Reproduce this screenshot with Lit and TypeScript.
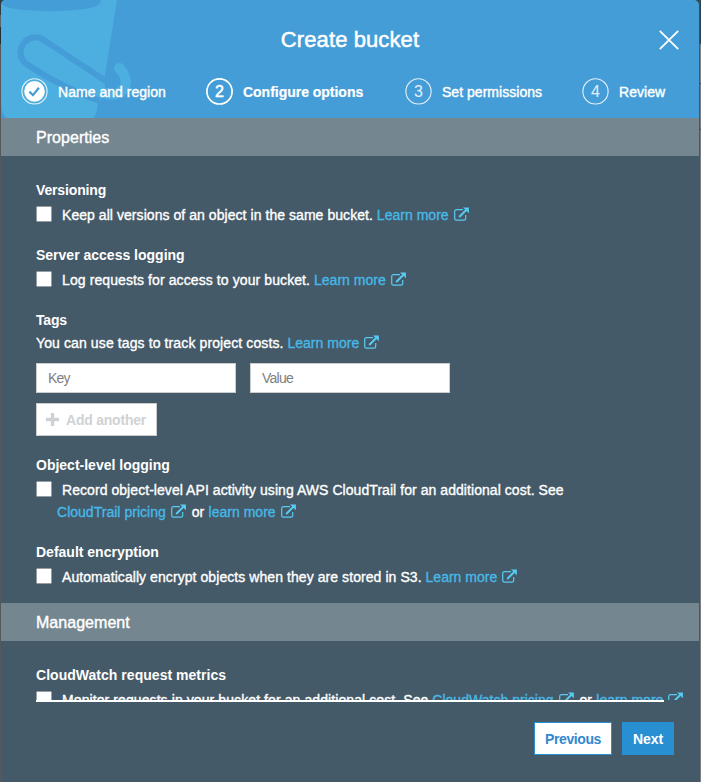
import { LitElement, html, svg, css, type TemplateResult } from "lit";
import { customElement, property } from "lit/decorators.js";
import { classMap } from "lit/directives/class-map.js";

const externalIcon = svg`
  <path d="M9 2.600H2.400a1.700 1.700 0 0 0-1.700 1.700v7.200a1.700 1.700 0 0 0 1.700 1.700h7.600a1.700 1.700 0 0 0 1.700-1.700V8"
    fill="none" stroke="currentColor" stroke-width="1.200"/>
  <path d="M5.200 10L12.200 3" fill="none" stroke="currentColor" stroke-width="2"/>
  <path d="M9 .4h5.900v5.900z" fill="currentColor"/>`;

/** Link followed by the "opens elsewhere" icon. */
@customElement("ext-link")
class ExtLink extends LitElement {
  static styles = css`
    :host { display: inline; color: #45bae9; }
    a { color: inherit; text-decoration: none; letter-spacing: 0.02px; -webkit-text-stroke: 0.3px #45bae9; }
    svg { width: 15px; height: 14px; margin-left: 5px; vertical-align: -1px; color: #58cbf3; }
  `;
  render() {
    return html`<a><slot></slot></a><svg viewBox="0 0 15 14">${externalIcon}</svg>`;
  }
}

/** Numbered entry of the wizard header. */
@customElement("wizard-step")
class WizardStep extends LitElement {
  @property({ type: Number }) number = 1;
  @property() status: "done" | "current" | "todo" = "todo";
  @property() label = "";

  static styles = css`
    :host { display: flex; align-items: center; gap: 10px; color: #fff; white-space: nowrap; }
    svg { width: 27px; height: 27px; flex: none; }
    text { font-size: 16px; text-anchor: middle; fill: #fff; }
    .ring { fill: none; stroke: #fff; stroke-width: 1.1; opacity: 0.85; }
    .label { font-size: 14px; line-height: 20px; letter-spacing: 0.03px; -webkit-text-stroke: 0.4px #fff; }
    .current .ring { stroke-width: 1.7; opacity: 1; }
    .current text { stroke: #fff; stroke-width: 0.5px; }
    .todo text { fill: #e2f0fa; }
    .label.bold { font-weight: bold; letter-spacing: -0.02px; -webkit-text-stroke: 0.2px #fff; }
  `;
  render() {
    return html`
      <svg viewBox="0 0 27 27" class=${this.status}>
        <circle class="ring" cx="13.5" cy="13.4" r="12.6"/>
        ${this.status === "done"
          ? svg`<circle cx="13.5" cy="13.4" r="10.3" fill="#fff"/>
              <path d="M8.400 13.600l3.600 3.600 5.900-7.400" fill="none" stroke="#459dd7" stroke-width="2.200"/>`
          : svg`<text x="13.5" y="19.2">${this.number}</text>`}
      </svg>
      <span class=${classMap({ label: true, bold: this.status === "current" })}>${this.label}</span>`;
  }
}

interface Option {
  title: string;
  key: string;
  body: TemplateResult;
}

@customElement("app-root")
class AppRoot extends LitElement {
  static styles = css`
    :host {
      display: block; width: 701px; height: 782px; overflow: hidden;
      font-family: "Liberation Sans", Arial, sans-serif; font-size: 14px; color: #fff;
    }
    .page {
      display: grid; grid-template-columns: 1px 698px 1px 1px; height: 782px;
      background: #555d62;
    }
    .edge-left { background: linear-gradient(#2f3b44 0 15px, #5a666d 15px 27px, #22303a 27px 44px, #55595c 44px); }
    .edge-shade { background: linear-gradient(#37505f 0 44px, #4c555b 44px); }
    .edge-right { background: linear-gradient(#33434e 0 44px, #838586 44px 83px, #44494c 83px 84px, #7d8082 84px 129px, #44494c 129px 130px, #7d8082 130px); }
    .corner { background: #33434e; height: 782px; }
    .dialog {
      display: flex; flex-direction: column; height: 782px; overflow: hidden;
      border-radius: 5px 5px 0 0; background: #455a68;
    }
    header { position: relative; flex: none; height: 118px; background: #459dd7; }
    .bucket { position: absolute; left: -1px; top: 0; width: 140px; height: 118px; }
    .title-row {
      position: relative; display: grid; grid-template-columns: 1fr auto 1fr;
      align-items: center; height: 78px; padding: 0 20px;
    }
    h1 {
      grid-column: 2; margin: 0; padding-top: 2px; font-size: 22px; font-weight: normal;
      letter-spacing: 0.1px; -webkit-text-stroke: 0.5px #fff;
    }
    .close { justify-self: end; width: 20px; height: 20px; margin-top: 2px; }
    .steps {
      position: relative; display: grid; grid-template-columns: 185px 199px 177px auto;
      padding-left: 20px;
    }
    .scroll { flex: none; height: 582px; overflow: hidden; }
    h2 {
      box-sizing: border-box; margin: 0; padding: 1px 0 0 35px; height: 38px; line-height: 38px;
      background: #748690; font-size: 16px; font-weight: normal; letter-spacing: 0.04px;
      -webkit-text-stroke: 0.4px #fff;
    }
    .group { padding: 24px 0 15px 35px; display: flex; flex-direction: column; gap: 19px; }
    h3 { margin: 0 0 4px; font-size: 14px; line-height: 20px; font-weight: bold; }
    .line { display: flex; line-height: 22px; white-space: nowrap; }
    .box {
      flex: none; box-sizing: border-box; width: 16px; height: 16px; margin: 2px 10px 0 0;
      background: #fff; border: 1px solid #979da0; border-radius: 1.5px;
    }
    .text { -webkit-text-stroke: 0.35px #fff; }
    .hanging { display: block; margin-left: -5px; }
    .or { margin-left: 2px; margin-right: 0.5px; }
    .versioning .copy { letter-spacing: 0.055px; }
    .access .copy { letter-spacing: 0.096px; }
    .tags h3 { margin-bottom: 2px; letter-spacing: -0.2px; }
    .tags .copy { letter-spacing: 0.112px; }
    .object .copy { letter-spacing: 0.058px; }
    .encryption .copy { letter-spacing: 0.07px; }
    .metrics .copy { letter-spacing: 0.09px; }
    .metrics ext-link:first-of-type { letter-spacing: 0.1px; }
    .versioning h3 { letter-spacing: -0.15px; }
    .metrics h3 { letter-spacing: 0.03px; }
    .fields { display: flex; gap: 14px; margin: 9px 0 10px; }
    input {
      box-sizing: border-box; width: 200px; height: 30px; padding: 0 11px; margin: 0;
      border: 1px solid #ccc; border-radius: 0; background: #fff; outline: none;
      font: 14px "Liberation Sans", Arial, sans-serif; letter-spacing: -0.75px;
    }
    input::placeholder { color: #808080; opacity: 1; }
    button {
      box-sizing: border-box; height: 33px; margin: 0; padding: 0; border-radius: 0;
      font: bold 14px "Liberation Sans", Arial, sans-serif;
    }
    .add {
      display: flex; align-items: center; gap: 7px; width: 121px; padding-left: 9px;
      background: #fff; border: 1px solid #ccc; color: #cfd2d4; letter-spacing: -0.22px;
      white-space: nowrap;
    }
    .add svg { width: 13px; height: 13px; }
    footer {
      flex: none; display: flex; justify-content: flex-end; gap: 10px;
      margin: 0 35px; padding: 20px 0 0; border-top: 2px solid #fff;
    }
    .previous { width: 78px; margin-left: auto; background: #fff; border: 1px solid #288fd3; color: #3387cf; letter-spacing: -0.4px; }
    .next { width: 52px; margin-right: -10px; background: #288fd3; border: 1px solid #288fd3; color: #fff; letter-spacing: -0.1px; }
  `;

  private properties: Option[] = [
    {
      title: "Versioning", key: "versioning",
      body: html`<span class="copy">Keep all versions of an object in the same bucket.</span> <ext-link>Learn more</ext-link>`,
    },
    {
      title: "Server access logging", key: "access",
      body: html`<span class="copy">Log requests for access to your bucket.</span> <ext-link>Learn more</ext-link>`,
    },
  ];

  private protection: Option[] = [
    {
      title: "Object-level logging", key: "object",
      body: html`<span class="copy">Record object-level API activity using AWS CloudTrail for an additional cost. See</span>
        <span class="hanging"><ext-link>CloudTrail pricing</ext-link> <span class="or">or</span> <ext-link>learn more</ext-link></span>`,
    },
    {
      title: "Default encryption", key: "encryption",
      body: html`<span class="copy">Automatically encrypt objects when they are stored in S3.</span> <ext-link>Learn more</ext-link>`,
    },
  ];

  private management: Option[] = [
    {
      title: "CloudWatch request metrics", key: "metrics",
      body: html`<span class="copy">Monitor requests in your bucket for an additional cost. See</span>
        <ext-link class="pricing">CloudWatch pricing</ext-link> <span class="or">or</span> <ext-link>learn more</ext-link>`,
    },
  ];

  private option(o: Option) {
    return html`
      <section class=${o.key}>
        <h3>${o.title}</h3>
        <div class="line"><span class="box"></span><div class="text">${o.body}</div></div>
      </section>`;
  }

  private tags() {
    return html`
      <section class="tags">
        <h3>Tags</h3>
        <div class="line"><div class="text"><span class="copy">You can use tags to track project costs.</span> <ext-link>Learn more</ext-link></div></div>
        <div class="fields"><input placeholder="Key"><input placeholder="Value"></div>
        <button class="add" disabled>
          <svg viewBox="0 0 13 13"><path d="M4.8 0h3.4v4.8H13v3.4H8.2V13H4.8V8.2H0V4.8h4.8z" fill="currentColor"/></svg>
          Add another
        </button>
      </section>`;
  }

  render() {
    return html`
      <div class="page">
        <div class="edge-left"></div>
        <div class="corner">
          <div class="dialog">
            <header>
              <svg class="bucket" viewBox="0 0 140 118">
                <path d="M1 0H117L104.500 78L105 95L98 102Q97 114 93.500 118H6Q1 112 1 100z" fill="#4daee0"/>
                <path d="M119.300 68.300C129.500 78 128 94.500 111 94.500C105 94.500 100 92 95 89.500" fill="none" stroke="#4daee0" stroke-width="10.500" stroke-linecap="round"/>
                <path d="M1 0H101Q101 8 80 9.500Q51 13 20 9.500Q3 7.500 1 3z" fill="#459dd7"/>
                <path d="M105 80.500L42 38.800A15 15 0 0 0 24.500 62.500Q55 84 99 100.800" fill="none" stroke="#459dd7" stroke-width="6"/>
                <path d="M103 79.500Q112 84.500 116 76.500" fill="none" stroke="#459dd7" stroke-width="5"/>
              </svg>
              <div class="title-row">
                <h1>Create bucket</h1>
                <svg class="close" viewBox="0 0 20 20"><path d="M.8.8L19.200 19.200M19.200.8L.8 19.200" stroke="#fff" stroke-width="1.800"/></svg>
              </div>
              <nav class="steps">
                <wizard-step number="1" status="done" label="Name and region"></wizard-step>
                <wizard-step number="2" status="current" label="Configure options"></wizard-step>
                <wizard-step number="3" label="Set permissions"></wizard-step>
                <wizard-step number="4" label="Review"></wizard-step>
              </nav>
            </header>
            <div class="scroll">
              <h2>Properties</h2>
              <div class="group">
                ${this.properties.map((o) => this.option(o))}
                ${this.tags()}
                ${this.protection.map((o) => this.option(o))}
              </div>
              <h2>Management</h2>
              <div class="group">${this.management.map((o) => this.option(o))}</div>
            </div>
            <footer>
              <button class="previous">Previous</button>
              <button class="next">Next</button>
            </footer>
          </div>
        </div>
        <div class="edge-shade"></div>
        <div class="edge-right"></div>
      </div>`;
  }
}
